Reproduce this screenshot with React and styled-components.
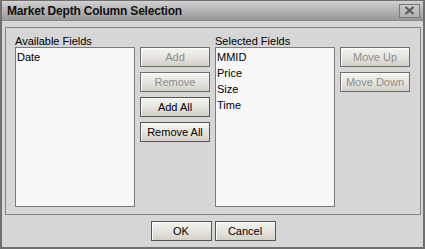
import styled, { createGlobalStyle } from 'styled-components'

const GlobalStyle = createGlobalStyle`
  html, body {
    margin: 0;
    padding: 0;
    background: #d6d6d6;
  }
  * {
    box-sizing: border-box;
  }
`

const availableFields = ['Date']
const selectedFields = ['MMID', 'Price', 'Size', 'Time']

export default function App() {
  return (
    <>
      <GlobalStyle />
      <Window>
        <TitleBar>
          <Title>Market Depth Column Selection</Title>
          <CloseButton>
            <svg width='11' height='9' viewBox='0 0 11 9'>
              <path
                d='M1.5 1 L9.5 8 M9.5 1 L1.5 8'
                stroke='#5a5a5a'
                strokeWidth='2.2'
                fill='none'
              />
            </svg>
          </CloseButton>
        </TitleBar>
        <Body>
          <GroupBox>
            <Label>Available Fields</Label>
            <Spacer />
            <Label>Selected Fields</Label>
            <Spacer />

            <ListBox>
              {availableFields.map(field => (
                <Item key={field}>{field}</Item>
              ))}
            </ListBox>
            <ButtonColumn>
              <Button disabled>Add</Button>
              <Button disabled>Remove</Button>
              <Button>Add All</Button>
              <Button>Remove All</Button>
            </ButtonColumn>
            <ListBox>
              {selectedFields.map(field => (
                <Item key={field}>{field}</Item>
              ))}
            </ListBox>
            <ButtonColumn>
              <Button disabled>Move Up</Button>
              <Button disabled>Move Down</Button>
            </ButtonColumn>
          </GroupBox>
          <Footer>
            <Button $width='61px'>OK</Button>
            <Button $width='61px'>Cancel</Button>
          </Footer>
        </Body>
      </Window>
    </>
  )
}

const Window = styled.div`
  width: 425px;
  height: 249px;
  border: 2px solid #707070;
  border-top-width: 1px;
  background: #d6d6d6;
  display: flex;
  flex-direction: column;
  font-family: 'Liberation Sans', Arial, sans-serif;
  font-size: 11px;
  color: #000;
`

const TitleBar = styled.div`
  height: 20px;
  flex: none;
  display: flex;
  align-items: center;
  justify-content: space-between;
  padding: 0 3px 0 5px;
  background: linear-gradient(to bottom, #d2d2d2 0%, #b4b4b4 50%, #989898 100%);
  border-bottom: 1px solid #8a8a8a;
`

const Title = styled.span`
  font-weight: bold;
  font-size: 12px;
  color: #101010;
  letter-spacing: -0.2px;
`

const CloseButton = styled.div`
  width: 21px;
  height: 14px;
  border: 1px solid #7a7a7a;
  background: linear-gradient(to bottom, #c8c8c8, #b2b2b2);
  display: flex;
  align-items: center;
  justify-content: center;
`

const Body = styled.div`
  flex: 1;
  display: flex;
  flex-direction: column;
  padding: 6px 2px 4px 3px;
`

const GroupBox = styled.div`
  height: 188px;
  border: 1px solid #858585;
  display: grid;
  grid-template-columns: 120px 70px 120px 70px;
  grid-template-rows: 12px 160px;
  column-gap: 5px;
  padding: 7px 9px 0 9px;
`

const Label = styled.div`
  line-height: 12px;
  white-space: nowrap;
`

const Spacer = styled.div``

const ListBox = styled.div`
  border: 1px solid #7c7c7c;
  background: #f7f7f7;
  padding-top: 1px;
`

const Item = styled.div`
  line-height: 16px;
  height: 16px;
  padding-left: 1px;
`

const ButtonColumn = styled.div`
  display: flex;
  flex-direction: column;
  gap: 5px;
`

const Button = styled.button`
  width: ${props => props.$width || '70px'};
  height: 20px;
  padding: 0;
  border: 1px solid #555;
  background: linear-gradient(to bottom, #f4f3ef 0%, #e6e4de 50%, #d3d0c8 100%);
  box-shadow: inset 1px 1px 0 #fbfbf9;
  font-family: 'Liberation Sans', Arial, sans-serif;
  font-size: 11px;
  color: #000;
  text-align: center;

  &:disabled {
    color: #8e8e8e;
    border-color: #6e6e6e;
  }
`

const Footer = styled.div`
  display: flex;
  justify-content: center;
  gap: 3px;
  margin-top: 6px;
`
